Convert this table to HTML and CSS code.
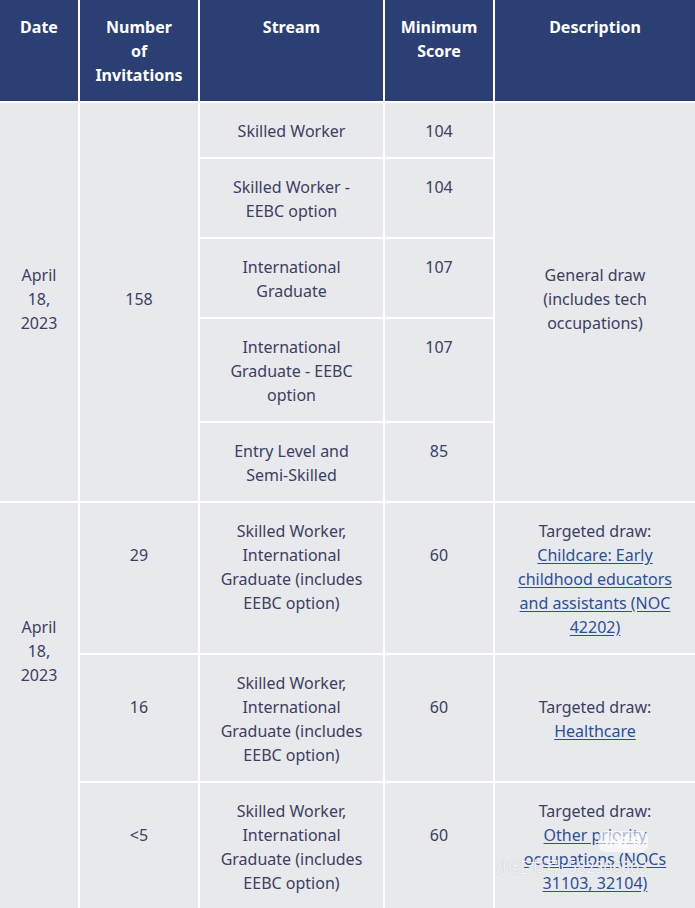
FILE: index.html
```html
<!DOCTYPE html>
<html lang="en">
<head>
<meta charset="utf-8">
<title>Invitations to apply</title>
<link rel="stylesheet" href="styles.css">
</head>
<body>
<div class="page">
<table class="draws">
  <colgroup>
    <col class="c-date"><col class="c-num"><col class="c-stream"><col class="c-score"><col class="c-desc">
  </colgroup>
  <thead>
    <tr>
      <th>Date</th>
      <th>Number<br>of<br>Invitations</th>
      <th>Stream</th>
      <th>Minimum<br>Score</th>
      <th class="last">Description</th>
    </tr>
  </thead>
  <tbody>
    <tr>
      <td rowspan="5" class="mid">April<br>18,<br>2023</td>
      <td rowspan="5" class="mid">158</td>
      <td>Skilled Worker</td>
      <td>104</td>
      <td rowspan="5" class="mid last">General draw (includes tech occupations)</td>
    </tr>
    <tr>
      <td>Skilled Worker - EEBC option</td>
      <td>104</td>
    </tr>
    <tr>
      <td>International Graduate</td>
      <td>107</td>
    </tr>
    <tr>
      <td>International Graduate - EEBC option</td>
      <td>107</td>
    </tr>
    <tr>
      <td>Entry Level and Semi-Skilled</td>
      <td>85</td>
    </tr>
    <tr>
      <td rowspan="3" class="date-low">April<br>18,<br>2023</td>
      <td class="low">29</td>
      <td>Skilled Worker, International Graduate (includes EEBC option)</td>
      <td class="low">60</td>
      <td class="last">Targeted draw:<br><a href="#">Childcare: Early childhood educators and assistants (NOC 42202)</a></td>
    </tr>
    <tr>
      <td class="low">16</td>
      <td>Skilled Worker, International Graduate (includes EEBC option)</td>
      <td class="low">60</td>
      <td class="low last">Targeted draw:<br><a href="#">Healthcare</a></td>
    </tr>
    <tr>
      <td class="low">&lt;5</td>
      <td>Skilled Worker, International Graduate (includes EEBC option)</td>
      <td class="low">60</td>
      <td class="last">Targeted draw:<br><a href="#">Other priority occupations (NOCs 31103, 32104)</a></td>
    </tr>
  </tbody>
</table>
<div class="wm-badge">小红书</div>
<div class="wm-text">小红书号: 582306603</div>
</div>
</body>
</html>
```

FILE: styles.css
```css
html, body {
  margin: 0;
  padding: 0;
  background: #ffffff;
}

.page {
  position: relative;
  width: 695px;
  height: 908px;
  overflow: hidden;
}

.draws {
  width: 695px;
  table-layout: fixed;
  border-collapse: separate;
  border-spacing: 0;
  font-family: "Noto Sans", "Open Sans", "Noto Sans CJK SC", sans-serif;
  font-size: 16px;
  line-height: 24px;
  color: #3b4060;
}

.c-date { width: 80px; }
.c-num { width: 120px; }
.c-stream { width: 185px; }
.c-score { width: 110px; }
.c-desc { width: 200px; }

.draws th,
.draws td {
  border-right: 2px solid #ffffff;
  border-bottom: 2px solid #ffffff;
  text-align: center;
  vertical-align: top;
}

.draws th {
  background: #2c3f74;
  color: #ffffff;
  font-weight: 700;
  padding: 15px 6px 14px;
}

.draws td {
  background: #e8e9ed;
  padding: 16px 15px 14px;
}

.draws .last {
  border-right: 0;
}

.draws td.mid {
  vertical-align: middle;
  padding-bottom: 23px;
}

.draws td.low {
  padding-top: 40px;
}

.draws td.date-low {
  padding-top: 112px;
}

.draws a {
  color: #2e4f93;
  text-decoration: underline;
  text-underline-offset: 2px;
}

.wm-badge {
  position: absolute;
  left: 598px;
  top: 831px;
  width: 50px;
  height: 21px;
  border-radius: 7px;
  background: rgba(255, 255, 255, 0.6);
  color: rgba(255, 255, 255, 0.95);
  font-family: "Noto Sans CJK SC", sans-serif;
  font-size: 12px;
  line-height: 21px;
  text-align: center;
  font-weight: 700;
}

.wm-text {
  position: absolute;
  left: 496px;
  top: 855px;
  color: rgba(255, 255, 255, 0.9);
  text-shadow: 0 0 1px rgba(60, 60, 80, 0.35);
  font-family: "Noto Sans CJK SC", sans-serif;
  font-size: 16px;
  line-height: 22px;
  white-space: nowrap;
}
```
